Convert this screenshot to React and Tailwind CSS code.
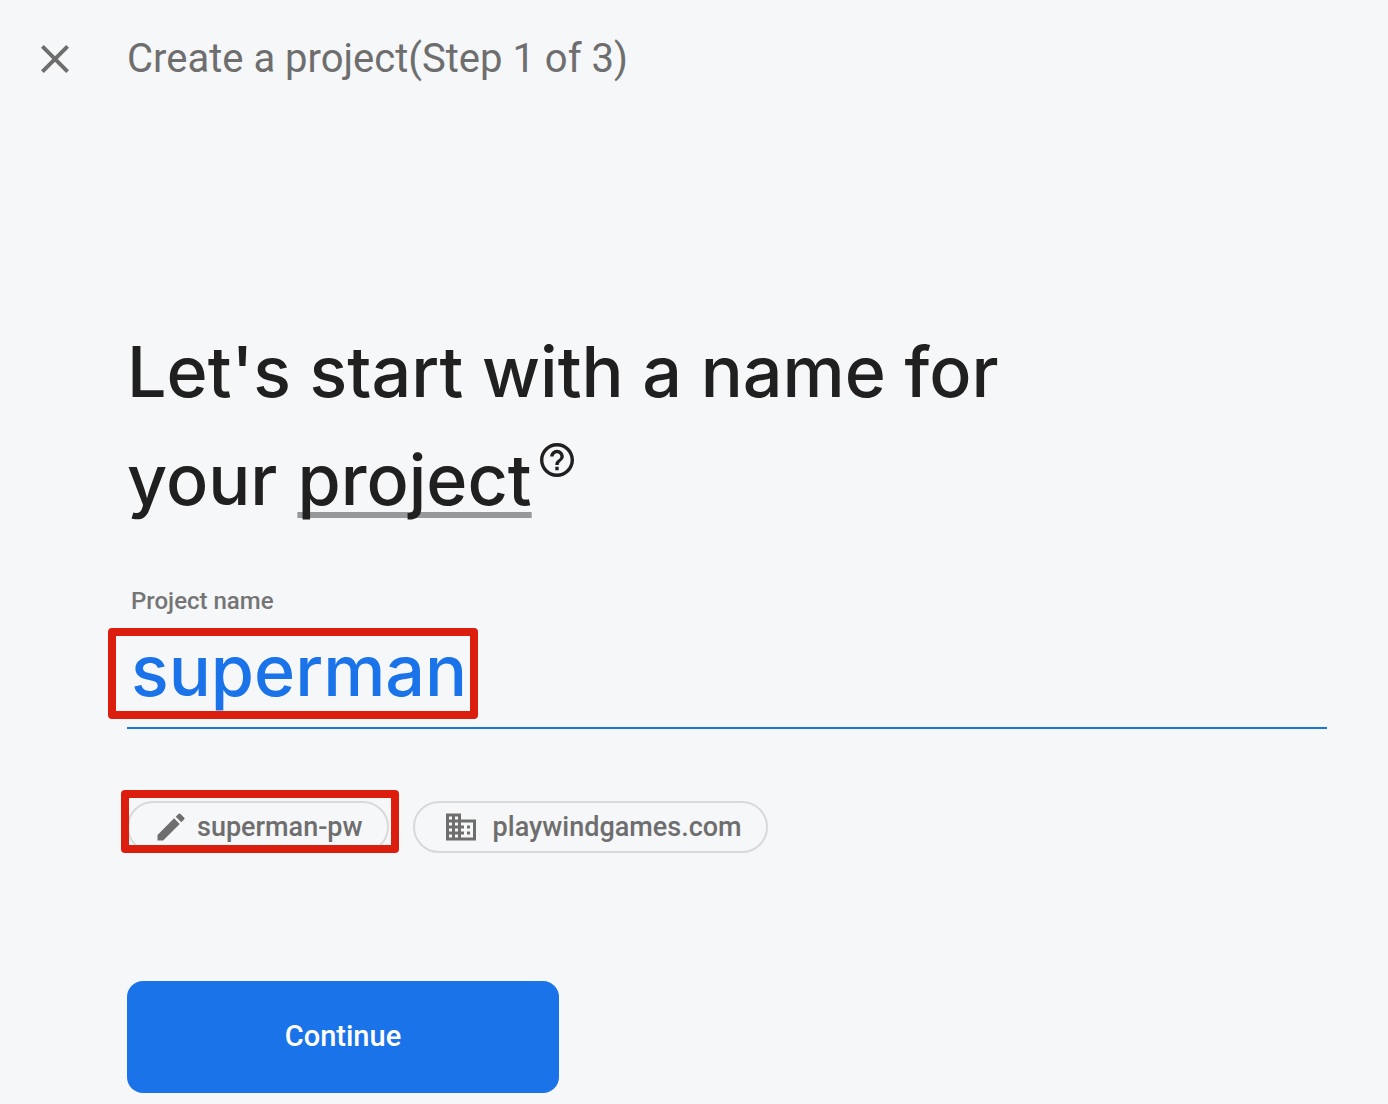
import React from 'react';

function CloseIcon() {
  return (
    <svg viewBox="0 0 28 28" className="size-7" fill="none" stroke="#6e6e6e" strokeWidth="4" aria-hidden="true">
      <path d="M1.4 1.4 26.6 26.6M26.6 1.4 1.4 26.6" />
    </svg>
  );
}

function HelpIcon() {
  return (
    <svg viewBox="2 2 20 20" className="size-[34px]" fill="#202020" aria-hidden="true">
      <path d="M11 18h2v-2h-2v2zm1-16C6.48 2 2 6.48 2 12s4.48 10 10 10 10-4.48 10-10S17.52 2 12 2zm0 18c-4.41 0-8-3.59-8-8s3.59-8 8-8 8 3.59 8 8-3.59 8-8 8zm0-14c-2.21 0-4 1.79-4 4h2c0-1.1.9-2 2-2s2 .9 2 2c0 2-3 1.75-3 5h2c0-2.25 3-2.5 3-5 0-2.21-1.79-4-4-4z" />
    </svg>
  );
}

function PencilIcon() {
  return (
    <svg viewBox="0 0 24 24" className="size-9" fill="#6e6e6e" aria-hidden="true">
      <path d="M3 17.25V21h3.75L17.81 9.94l-3.75-3.75L3 17.25zM20.71 7.04a1 1 0 0 0 0-1.41l-2.34-2.34a1 1 0 0 0-1.41 0l-1.83 1.83 3.75 3.75 1.83-1.83z" />
    </svg>
  );
}

function DomainIcon() {
  return (
    <svg viewBox="0 0 24 24" className="size-9" fill="#6e6e6e" aria-hidden="true">
      <path d="M12 7V3H2v18h20V7H12zM6 19H4v-2h2v2zm0-4H4v-2h2v2zm0-4H4V9h2v2zm0-4H4V5h2v2zm4 12H8v-2h2v2zm0-4H8v-2h2v2zm0-4H8V9h2v2zm0-4H8V5h2v2zm10 12h-8v-2h2v-2h-2v-2h2v-2h-2V9h8v10zm-2-8h-2v2h2v-2zm0 4h-2v2h2v-2z" />
    </svg>
  );
}

export default function App() {
  return (
    <div className="min-h-screen bg-[#f6f7f9] font-['Roboto',sans-serif] text-[#202020]">
      <header className="flex h-[118px] items-center pl-[41px] text-[#6e6e6e]">
        <button type="button" aria-label="Close" className="mr-[58px]">
          <CloseIcon />
        </button>
        <h1 className="text-[40px] leading-[48px]">Create a project(Step 1 of 3)</h1>
      </header>

      <main className="pt-[200px] pr-[61px] pb-[11px] pl-[127px]">
        <h2 className="font-['Inter',sans-serif] text-[70px] leading-[108px] font-medium">
          <span className="block">Let's start with a name for</span>
          <span className="flex flex-wrap gap-x-5">
            <span>your</span>
            <span className="flex items-start gap-2">
              <span className="underline decoration-[#979899] decoration-[6px] underline-offset-[7px] [text-decoration-skip-ink:none]">project</span>
              <button type="button" aria-label="Help" className="mt-[17px]">
                <HelpIcon />
              </button>
            </span>
          </span>
        </h2>

        <div className="mt-[51px]">
          <label htmlFor="project-name" className="block pl-1 text-[24px] leading-8 font-medium text-[#757575]">
            Project name
          </label>
          <div className="relative border-b-2 border-[#1a73e8] pb-1">
            <input
              id="project-name"
              defaultValue="superman"
              className="block h-[106px] w-full bg-transparent pl-1 font-['Inter',sans-serif] text-[70px] font-medium text-[#1a73e8] outline-none"
            />
            <div className="pointer-events-none absolute top-[11px] -left-[19px] h-[91px] w-[370px] rounded border-8 border-[#dc1e0f]" />
          </div>
        </div>

        <div className="mt-[72px] flex gap-6">
          <div className="relative">
            <button type="button" className="flex h-[52px] items-center gap-2 rounded-full border-2 border-[#d7d9db] px-6 text-[27px] font-medium text-[#6e6e6e]">
              <PencilIcon />
              superman-pw
            </button>
            <div className="pointer-events-none absolute -top-[11px] -left-[6px] h-[63px] w-[278px] rounded border-8 border-[#dc1e0f]" />
          </div>
          <button type="button" className="flex h-[52px] items-center gap-3.5 rounded-full border-2 border-[#d7d9db] pr-6 pl-7 text-[27px] font-medium text-[#6e6e6e]">
            <DomainIcon />
            playwindgames.com
          </button>
        </div>

        <button type="button" className="mt-32 h-28 w-[432px] rounded-2xl bg-[#1a73e8] text-[29px] font-medium text-white">
          Continue
        </button>
      </main>
    </div>
  );
}
